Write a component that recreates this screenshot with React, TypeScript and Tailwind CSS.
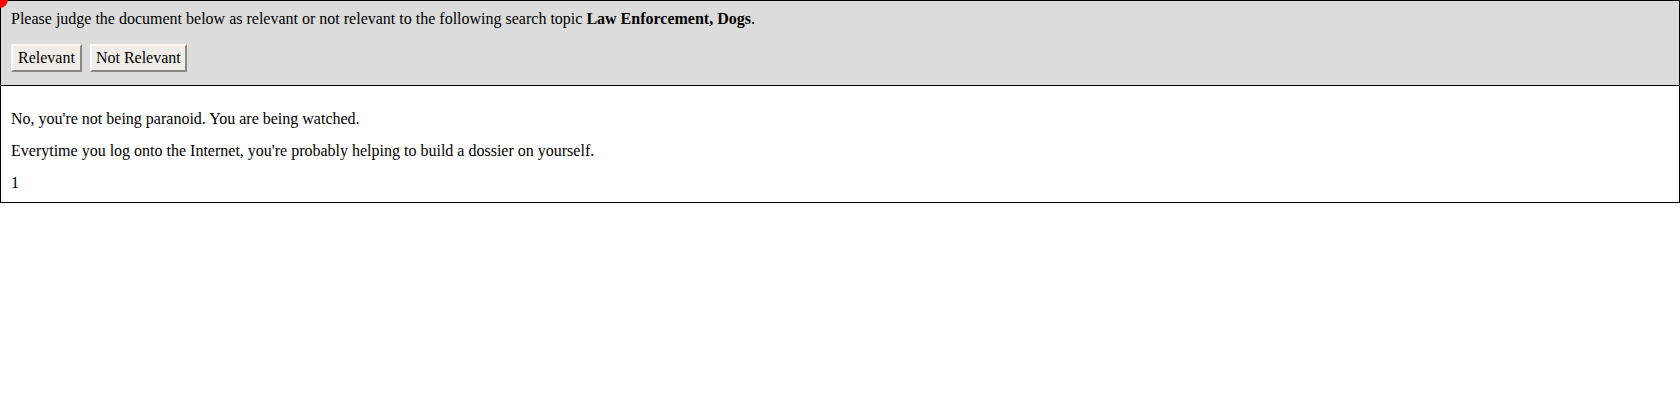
import React from 'react'

const App = () => {
    return (
        <div className="relative w-[1680px] h-[400px] bg-white text-black font-['Liberation_Serif',serif] text-[16px] leading-[18px]">
            <div className="absolute -left-[9px] -top-[9px] w-[17px] h-[17px] rounded-full bg-[#ff0000]" />
            <div className="border border-black bg-[#dcdcdc] px-[10px] pt-[9px] pb-[13px]">
                <p>
                    Please judge the document below as relevant or not relevant to the following search topic{' '}
                    <b>Law Enforcement, Dogs</b>.
                </p>
                <div className="flex gap-[8px] mt-[16px]">
                    <button className="h-[28px] px-[5px] bg-[#f0ede8] border-2 border-t-[#fbfaf8] border-l-[#fbfaf8] border-r-[#8a8884] border-b-[#8a8884]">
                        Relevant
                    </button>
                    <button className="h-[28px] px-[4px] bg-[#f0ede8] border-2 border-t-[#fbfaf8] border-l-[#fbfaf8] border-r-[#8a8884] border-b-[#8a8884]">
                        Not Relevant
                    </button>
                </div>
            </div>
            <div className="border border-t-0 border-black px-[10px] pt-[24px] pb-[10px] flex flex-col gap-[14px]">
                <p>No, you're not being paranoid. You are being watched.</p>
                <p>Everytime you log onto the Internet, you're probably helping to build a dossier on yourself.</p>
                <p>1</p>
            </div>
        </div>
    )
}

export default App
